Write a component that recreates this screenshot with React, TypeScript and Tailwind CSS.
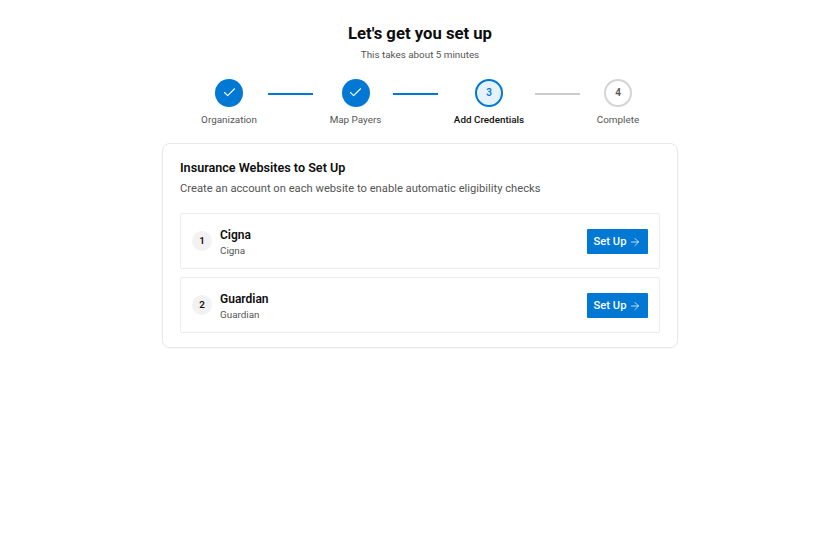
import { FC } from "react";
import { ArrowRight, Check } from "lucide-react";

type StepState = "done" | "active" | "todo";

const steps: Array<{ label: string; state: StepState; width: string }> = [
  { label: "Organization", state: "done", width: "w-[56px]" },
  { label: "Map Payers", state: "done", width: "w-[51px]" },
  { label: "Add Credentials", state: "active", width: "w-[70px]" },
  { label: "Complete", state: "todo", width: "w-[42px]" },
];

const lines = [
  "ml-[11px] mr-[17px] bg-[#0078d4]",
  "ml-[12px] mr-[16px] bg-[#0078d4]",
  "ml-[11px] mr-[17px] bg-[#cccccc]",
];

const payers = ["Cigna", "Guardian"];

const StepCircle: FC<{ index: number; state: StepState }> = ({ index, state }) => {
  if (state === "done") {
    return (
      <div className="w-[28px] h-[28px] shrink-0 rounded-full bg-[#0078d4] flex items-center justify-center pb-[1px] text-white">
        <Check size={15} strokeWidth={1.75} />
      </div>
    );
  }
  if (state === "active") {
    return (
      <div className="w-[28px] h-[28px] shrink-0 rounded-full border-2 border-[#0078d4] bg-[#e6f2fb] flex items-center justify-center pb-[1px] text-[10px] font-semibold text-[#0078d4]">
        {index + 1}
      </div>
    );
  }
  return (
    <div className="w-[28px] h-[28px] shrink-0 rounded-full border-2 border-[#d4d4d4] bg-white flex items-center justify-center pb-[1px] text-[10px] font-semibold text-[#555555]">
      {index + 1}
    </div>
  );
};

const Stepper: FC = () => {
  return (
    <div className="flex items-start justify-center mt-[17px]">
      {steps.map((step, index) => (
        <div key={step.label} className="flex items-start">
          <div className={`flex flex-col items-center ${step.width}`}>
            <StepCircle index={index} state={step.state} />
            <span
              className={`mt-[6px] text-[9.9px] leading-[14px] whitespace-nowrap ${
                step.state === "active" ? "font-medium text-[#111111]" : "font-normal text-[#555555]"
              }`}
            >
              {step.label}
            </span>
          </div>
          {index < lines.length && <div className={`w-[45px] h-[2px] mt-[14px] ${lines[index]}`} />}
        </div>
      ))}
    </div>
  );
};

export default function App() {
  return (
    <div className="min-h-[551px] bg-white flex flex-col items-center pt-[23px] font-['Roboto',sans-serif]">
      <h1 className="text-[16.7px] leading-[22px] font-bold text-[#0d0d0d]">Let's get you set up</h1>
      <p className="mt-[3px] text-[9.85px] leading-[14px] text-[#555555]">This takes about 5 minutes</p>
      <Stepper />
      <div className="mt-[16px] w-[516px] rounded-[8px] border border-[#e8e8e8] shadow-[0_1px_2px_rgba(0,0,0,0.04)] px-[17px] pt-[15px] pb-[14px]">
        <h2 className="text-[12.6px] leading-[18px] font-semibold text-[#0d0d0d]">Insurance Websites to Set Up</h2>
        <p className="mt-[4px] text-[11.2px] leading-[16px] text-[#555555]">
          Create an account on each website to enable automatic eligibility checks
        </p>
        <div className="mt-[16px] flex flex-col gap-[8px]">
          {payers.map((payer, index) => (
            <div
              key={payer}
              className="h-[56px] rounded-[2px] border border-[#ececec] flex items-center pl-[11px] pr-[11px]"
            >
              <div className="w-[20px] h-[20px] rounded-full bg-[#f2f2f2] flex items-center justify-center text-[9.85px] font-semibold text-[#111111]">
                {index + 1}
              </div>
              <div className="ml-[8px] pt-[2px] flex flex-col">
                <span className="text-[12px] leading-[17px] font-semibold text-[#0d0d0d]">{payer}</span>
                <span className="text-[9.85px] leading-[14px] text-[#555555]">{payer}</span>
              </div>
              <button className="ml-auto w-[61px] h-[25px] rounded-[1px] bg-[#0078d4] text-white text-[11.2px] font-medium flex items-center justify-center gap-[3px] pt-[2px]">
                Set Up
                <ArrowRight size={12} strokeWidth={1.5} />
              </button>
            </div>
          ))}
        </div>
      </div>
    </div>
  );
}
